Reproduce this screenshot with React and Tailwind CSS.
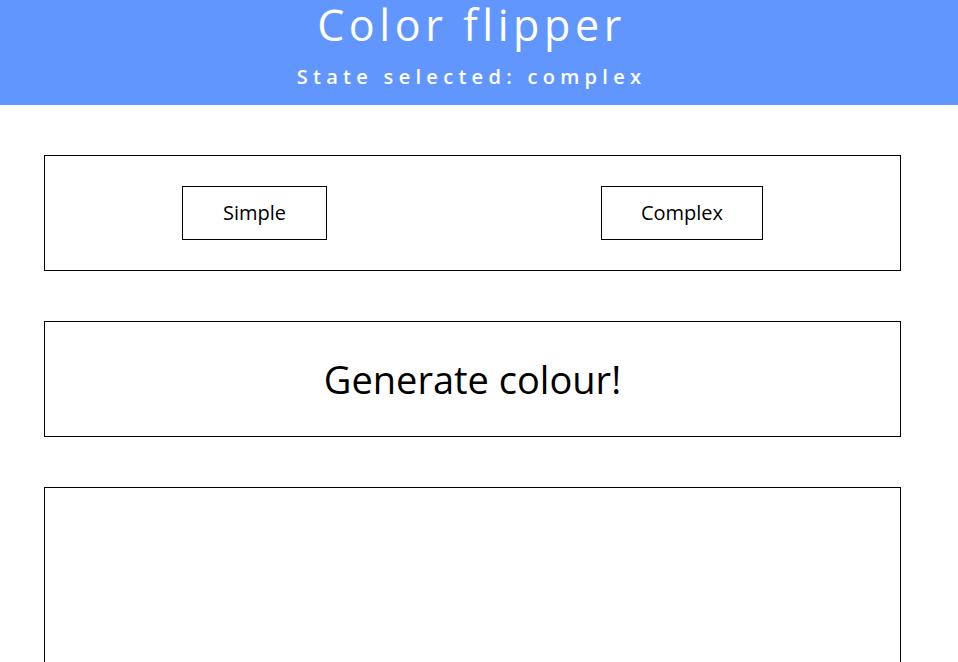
export default function App() {
  const font = { fontFamily: '"Open Sans", "DejaVu Sans", sans-serif' };
  return (
    <div className="w-full min-h-[662px] bg-white text-black" style={font}>
      <header className="h-[105px] bg-[#6196ff] text-white">
        <div className="w-[943px] flex flex-col items-center">
          <h1 className="h-[52px] leading-[50px] text-[43px] font-normal tracking-[4.6px]">Color flipper</h1>
          <p className="mt-[11px] text-[20px] leading-[28px] font-semibold tracking-[5.3px]">State selected: complex</p>
        </div>
      </header>
      <div className="ml-[44px] w-[857px] flex flex-col gap-[50px] pt-[50px]">
        <div className="border border-black py-[30px] flex justify-around items-center">
          <button className="w-[145px] h-[54px] border border-black bg-white text-[20px]">Simple</button>
          <button className="w-[162px] h-[54px] border border-black bg-white text-[20px]">Complex</button>
        </div>
        <div className="h-[116px] border border-black flex items-center justify-center">
          <span className="text-[38px]">Generate colour!</span>
        </div>
        <div className="h-[200px] border border-black"></div>
      </div>
    </div>
  );
}
